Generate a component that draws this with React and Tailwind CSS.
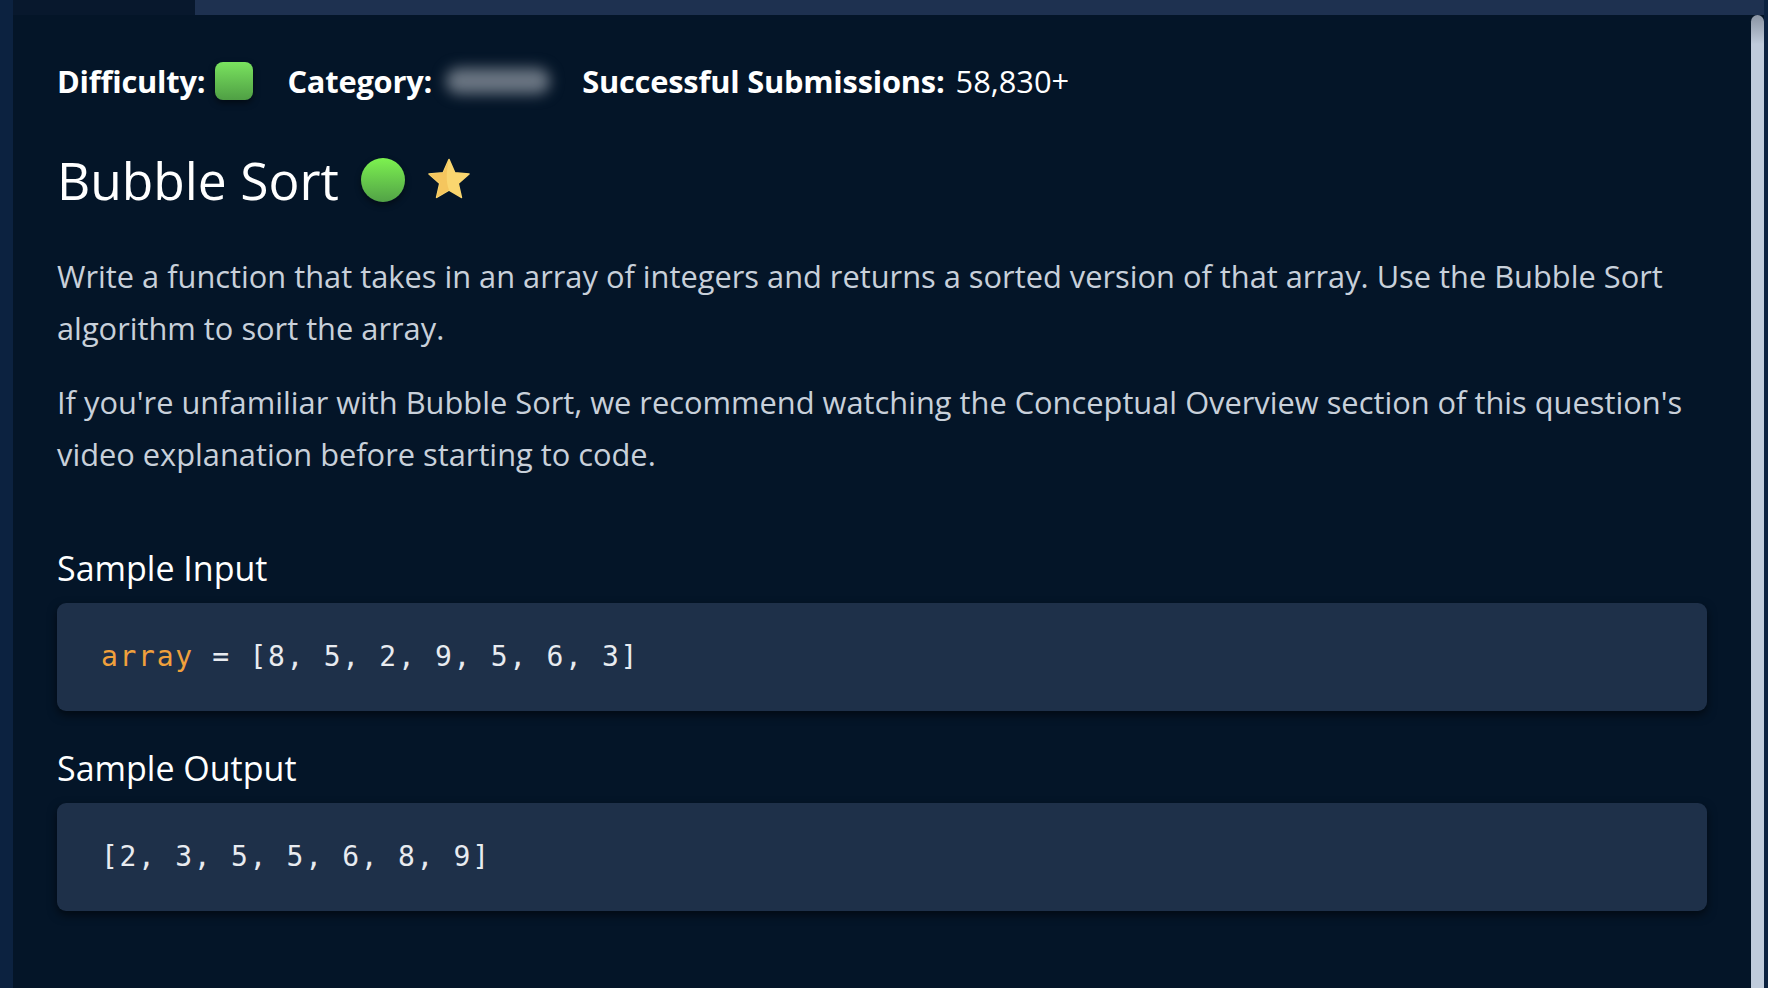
export default function App() {
  return (
    <div className="flex h-screen w-full overflow-hidden bg-[#0c2240]" style={{ fontFamily: '"Open Sans", "Noto Sans", sans-serif' }}>
      {/* left edge */}
      <div className="w-[13px] shrink-0 bg-[#0c2240]"></div>

      <div className="flex w-[1751px] shrink-0 flex-col">
        {/* tab bar */}
        <div className="flex h-[15px] shrink-0">
          <div className="w-[182px] bg-[#08182d]"></div>
          <div className="flex-1 bg-[#1e3150]"></div>
        </div>

        <div className="flex flex-1 bg-[#041528]">
          <div className="flex-1 px-[44px] pt-[47px]">
            {/* meta row */}
            <div className="flex h-[38px] items-center text-[30.8px] text-white">
              <span className="font-bold tracking-[-0.2px]">Difficulty:</span>
              <span className="ml-[10px] h-[38px] w-[38px] rounded-[8px] bg-linear-to-b from-[#7ae35f] to-[#4f9f44] shadow-[0_3px_6px_rgba(0,0,0,0.5)]"></span>
              <span className="ml-[34px] font-bold tracking-[-0.2px]">Category:</span>
              <span className="ml-[14px] h-[26px] w-[104px] rounded-full bg-[#6a7582] blur-[7px]"></span>
              <span className="ml-[32px] font-bold tracking-[-0.2px]">Successful Submissions:</span>
              <span className="ml-[11px]">58,830+</span>
            </div>

            {/* title */}
            <div className="mt-[52px] flex h-[56px] items-center">
              <h1 className="text-[51.5px] leading-[56px] text-white">Bubble Sort</h1>
              <span className="ml-[22px] h-[44px] w-[44px] rounded-full bg-linear-to-b from-[#7df24f] to-[#52a246] shadow-[0_3px_6px_rgba(0,0,0,0.45)]"></span>
              <svg className="ml-[20px]" width="48" height="48" viewBox="0 0 24 24">
                <path d="M12 1.8l2.9 6.6 7.1.6-5.4 4.7 1.6 7-6.2-3.7-6.2 3.7 1.6-7L2 9l7.1-.6z" fill="#fad66f" strokeLinejoin="round" stroke="#fad66f" strokeWidth="0.8" />
                <path d="M12 1.8l-2.9 6.6L2 9l5.4 4.7-1.6 7 6.2-3.7c-1.6-4-1.4-9.5 0-15.2z" fill="#f5c65e" />
              </svg>
            </div>

            {/* description */}
            <p className="mt-[42px] text-[30.8px] leading-[52px] text-[#c8d0da]">
              Write a function that takes in an array of integers and returns a sorted version of that array. Use the Bubble Sort algorithm to sort the array.
            </p>
            <p className="mt-[22px] text-[30.8px] leading-[52px] text-[#c8d0da]">
              If you're unfamiliar with Bubble Sort, we recommend watching the Conceptual Overview section of this question's video explanation before starting to code.
            </p>

            {/* sample input */}
            <h3 className="mt-[68px] text-[34px] leading-[40px] text-white">Sample Input</h3>
            <div className="mt-[15px] flex h-[108px] items-center rounded-[9px] bg-[#1e3049] pl-[44px] shadow-[0_4px_10px_rgba(0,0,0,0.55)]">
              <pre className="text-[28px] tracking-[1.7px] text-[#e8ebf0]" style={{ fontFamily: '"DejaVu Sans Mono", "Liberation Mono", monospace' }}>
                <span className="text-[#f0a03c]">array</span> = [8, 5, 2, 9, 5, 6, 3]
              </pre>
            </div>

            {/* sample output */}
            <h3 className="mt-[37px] text-[34px] leading-[40px] text-white">Sample Output</h3>
            <div className="mt-[15px] flex h-[108px] items-center rounded-[9px] bg-[#1e3049] pl-[44px] shadow-[0_4px_10px_rgba(0,0,0,0.55)]">
              <pre className="text-[28px] tracking-[1.7px] text-[#e8ebf0]" style={{ fontFamily: '"DejaVu Sans Mono", "Liberation Mono", monospace' }}>
                [2, 3, 5, 5, 6, 8, 9]
              </pre>
            </div>
          </div>

          {/* scrollbar */}
          <div className="w-[13px] shrink-0 rounded-t-full bg-linear-to-b from-[#8a94a3] from-0% via-[#bfcbdb] via-[3%] to-[#bfcbdb]"></div>
        </div>
      </div>

      <div className="flex-1 bg-[#0c2240]"></div>
    </div>
  );
}
